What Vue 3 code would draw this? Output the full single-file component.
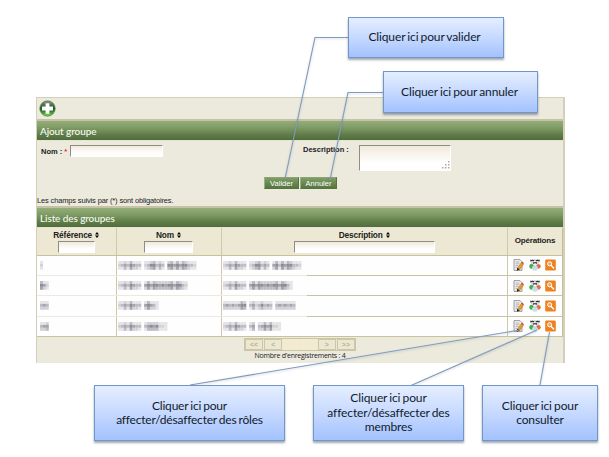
<script setup>
const rows = [
  { id: 1, ref: '20', nom: '234354330235534305545455332', desc: '234354330235534304535455332' },
  { id: 2, ref: '542', nom: '2343543304545545455455320', desc: '234354330454554545545531' },
  { id: 3, ref: '343', nom: '23435433045431', desc: '3434345503423534303434343' },
  { id: 4, ref: '344', nom: '23435433034545221', desc: '23435433034034545221' },
]
const tints = ['none', '#e6e4e6', '#d3d1d6', '#bcbac2', '#a5a3ab', '#8d8b94', '#6e6c75']
const lines = [0, 1, 2]
const cells = (s) =>
  s.split('').flatMap((c, i) =>
    lines.map((r) => {
      const v = Number(c)
      const shade = v === 0 ? 0 : r === 1 ? v : Math.max(1, v - (r === 0 ? 2 : 1) - ((i * 5 + r) % 2))
      return { x: i * 2.9, y: r * 2.9, fill: tints[shade] }
    })
  )
const callouts = [
  { k: 'valider', lines: ['Cliquer ici pour valider'] },
  { k: 'annuler', lines: ['Cliquer ici pour annuler'] },
  { k: 'roles', lines: ['Cliquer ici pour', 'affecter/désaffecter des rôles'] },
  { k: 'membres', lines: ['Cliquer ici pour', 'affecter/désaffecter des', 'membres'] },
  { k: 'consulter', lines: ['Cliquer ici pour', 'consulter'] },
]
</script>

<template>
  <main class="page">
    <section class="panel">
      <div class="toolbar">
        <svg width="17" height="17" viewBox="0 0 17 17">
          <defs>
            <linearGradient id="ball" x1="0" y1="0" x2="0" y2="1">
              <stop offset="0" stop-color="#8b9c86" />
              <stop offset=".45" stop-color="#24502a" />
              <stop offset=".6" stop-color="#1d6a1c" />
              <stop offset="1" stop-color="#7ee04a" />
            </linearGradient>
          </defs>
          <circle cx="8.5" cy="8.5" r="7.7" fill="url(#ball)" stroke="#55734f" stroke-width=".7" />
          <path d="M6.6 3.2h3.8v3.4h3.6v3.8h-3.6v3.4H6.6v-3.4H3V6.6h3.6z" fill="#fff" />
        </svg>
      </div>
      <h2 class="bar">Ajout groupe</h2>
      <form class="form" @submit.prevent>
        <div class="fields">
          <label class="nom">Nom : <i>*</i></label>
          <input class="field nom-input" />
          <label class="desc">Description :</label>
          <div class="field area">
            <svg width="9" height="9" viewBox="0 0 9 9" fill="#aaa">
              <path d="M7 0h1.5v1.5H7zM7 3h1.5v1.5H7zM4 3h1.5v1.5H4zM7 6h1.5v1.5H7zM4 6h1.5v1.5H4zM1 6h1.5v1.5H1z" />
            </svg>
          </div>
        </div>
        <div class="buttons"><button>Valider</button><button>Annuler</button></div>
        <p class="hint">Les champs suivis par (*) sont obligatoires.</p>
      </form>
      <h2 class="bar">Liste des groupes</h2>
      <div class="table">
        <div class="row head">
          <div class="cell"><span>Référence <svg width="4" height="6" viewBox="0 0 4 6"><path d="M2 0L4 2.6H0zM2 6L0 3.4H4z" /></svg></span><input class="field w1" /></div>
          <div class="cell"><span>Nom <svg width="4" height="6" viewBox="0 0 4 6"><path d="M2 0L4 2.6H0zM2 6L0 3.4H4z" /></svg></span><input class="field w2" /></div>
          <div class="cell"><span>Description <svg width="4" height="6" viewBox="0 0 4 6"><path d="M2 0L4 2.6H0zM2 6L0 3.4H4z" /></svg></span><input class="field w3" /></div>
          <div class="cell ops-title">Opérations</div>
        </div>
        <div v-for="r in rows" :key="r.id" class="row">
          <div v-for="(s, i) in [r.ref, r.nom, r.desc]" :key="i" class="cell" :class="'c' + i">
            <svg class="mosaic" width="86" height="9">
              <rect v-for="(c, j) in cells(s)" :key="j" :x="c.x" :y="c.y" width="3" height="3" :fill="c.fill" />
            </svg>
          </div>
          <div class="cell ops">
            <svg width="11" height="12" viewBox="0 0 11 12">
              <path d="M1 .6h6l2 2v8.8H1z" fill="#f0f0f0" stroke="#858585" stroke-width=".8" />
              <path d="M2.5 3h4M2.5 4.8h4M2.5 6.6h3M2.5 8.4h2" stroke="#999" stroke-width=".7" />
              <path d="M4.3 9.4L8.4 3.4l2.2 1.5-4.2 6z" fill="#ee9a2b" stroke="#8d541f" stroke-width=".4" />
              <path d="M4.2 8.8l2.4 1.8-2.7 1.1z" fill="#222" />
              <path d="M8.2 3.8l.8-1 1.9 1.3-.7 1z" fill="#c84335" />
            </svg>
            <svg width="12" height="12" viewBox="0 0 12 12">
              <circle cx="2.8" cy="7.3" r="2.5" fill="#45ad4d" />
              <circle cx="9.3" cy="7.3" r="2.4" fill="#e5683f" />
              <ellipse cx="6" cy="9.1" rx="2.9" ry="2.7" fill="#c5dfe9" />
              <rect x="1.7" y="1.4" width="3.6" height="3.8" rx="1.5" fill="#dcdcdc" />
              <rect x="6.6" y="1.4" width="3.6" height="3.8" rx="1.5" fill="#dcdcdc" />
              <circle cx="6" cy="5.3" r="1.9" fill="#f7efed" stroke="#aaa" stroke-width=".4" />
              <path d="M1.3 2.5V.5l1 .5 1.2-.6 1 .6 1-.5-.3 1.800-1.800-.4zM10.700 2.500V.5l-1 .5L8.500.4l-1 .6-1-.5.3 1.800 1.800-.4zM4 4.800L4.200 3l1.100.4.800-.6.800.6L8 3.100l.1 1.700L6 4.200z" fill="#333" />
            </svg>
            <svg width="11" height="12" viewBox="0 0 11 12">
              <rect x=".2" y=".5" width="10.6" height="11" rx="1.3" fill="#ee811d" />
              <circle cx="4.6" cy="4.8" r="2.1" fill="#f6a55b" stroke="#fff" stroke-width="1" />
              <path d="M6.2 6.5l2.4 2.5" stroke="#fff" stroke-width="1.4" stroke-linecap="round" />
            </svg>
          </div>
        </div>
      </div>
      <footer class="foot">
        <div class="pager"><b>&lt;&lt;</b><b>&lt;</b><em></em><em></em><b>&gt;</b><b>&gt;&gt;</b></div>
        <p>Nombre d'enregistrements : 4</p>
      </footer>
    </section>

    <svg class="links" width="609" height="457" viewBox="0 0 609 457">
      <g fill="none" stroke="#7d9cc0" stroke-width="1.1">
        <path d="M348 37.5H315L285 179" />
        <path d="M383 92.5H348L330 180" />
        <path d="M520 330L190 385" />
        <path d="M537 330L411 385.5" />
        <path d="M549.5 332L540 385" />
      </g>
    </svg>
    <div v-for="c in callouts" :key="c.k" class="callout" :class="c.k">
      <span v-for="l in c.lines" :key="l">{{ l }}</span>
    </div>
  </main>
</template>

<style>
body { background: #fff; overflow: hidden; }
</style>
<style scoped>
* { box-sizing: border-box; }
h2, p { margin: 0; }
.page { position: relative; width: 609px; height: 457px; padding: 97px 0 0 36px; font-family: "Liberation Sans", Arial, sans-serif; font-size: 7.5px; color: #222; }
.panel { width: 529px; height: 266px; background: #ece9dd; border: 1px solid #d3cfb9; border-bottom: 0; border-right-width: 2px; display: flex; flex-direction: column; }
.toolbar { height: 21px; padding: 2px 0 0 2px; }
.toolbar svg { display: block; }
.bar { height: 22px; border-top: 2px solid #c5c2a5; border-bottom: 1px solid #e4e6d3; background: linear-gradient(#94ad79, #7f9b65 35%, #5d7b47 75%, #506c3b); background-clip: padding-box; color: #f7faf0; font: 500 10px/20px Lato, sans-serif; letter-spacing: -.1px; padding-left: 3px; }
.form { height: 65px; display: flex; flex-direction: column; }
.fields { display: flex; height: 36px; padding: 4px 0 0 4px; align-items: flex-start; font-weight: bold; }
.nom { width: 29px; padding-top: 2px; white-space: nowrap; }
.nom i { color: #e33; font-style: normal; }
.nom-input { width: 93px; height: 12px; }
.desc { margin-left: 140px; width: 56px; white-space: nowrap; }
.field { display: block; padding: 0; border: 1px solid #fff; border-top-color: #8f8c80; border-left-color: #8f8c80; border-radius: 0; background: linear-gradient(#f2e9dc, #fff 70%); outline: 0; }
.area { width: 92px; height: 26px; display: flex; align-items: flex-end; justify-content: flex-end; }
.buttons { display: flex; padding-left: 227px; gap: 1px; }
button { height: 12px; width: 35px; padding: 0; border: 1px solid #577343; border-left-color: #9caf87; border-top-color: #8ba375; background: linear-gradient(#7f9d66, #56763e); color: #fff; font: 7.5px/9px "Liberation Sans", sans-serif; }
button + button { width: 37px; }
.hint { margin-top: 7px; line-height: 10px; letter-spacing: -.15px; white-space: nowrap; }
.table { height: 109px; border-right: 1px solid #c5be98; }
.row { display: grid; grid-template-columns: 79.5px 105px 286.5px 1fr; height: 20.35px; background: #fefefe; border-bottom: 1px solid #c8c29f; border-image: linear-gradient(to right, #eceae0 51.5%, #c8c29f 51.5%) 1; }
.head { height: 27.6px; background: #ece8d3; font-weight: bold; }
.head, .row:last-child { border-image: none; }
.cell { border-right: 1px solid #cfc9a9; display: flex; align-items: center; }
.cell:last-child { border-right: 0; }
.head .cell { flex-direction: column; font-size: 8.3px; letter-spacing: -.15px; line-height: 10px; padding-top: 2px; }
.head .ops-title { font-size: 8px; justify-content: center; padding-top: 0; }
.head .field { height: 12px; margin-top: 1px; }
.head svg { margin-left: 1px; }
.w1 { width: 37px; }
.w2 { width: 49px; }
.w3 { width: 141px; }
.mosaic { filter: blur(.6px); margin-left: 1px; display: block; }
.c0 .mosaic { margin-left: 3px; width: 14px; }
.ops { gap: 4.5px; padding-left: 5px; }
.foot { display: flex; flex-direction: column; align-items: center; padding-top: 1px; }
.pager { display: flex; height: 13px; width: 112px; border: 1px solid #cdc6a4; background: #efe8cf; gap: 1px; }
.pager b { flex: 1; border: 1px solid #cdc7aa; color: #b9b28b; font-size: 7px; line-height: 10px; text-align: center; background: #ece7d2; }
.pager em { flex: 1; background: #f2ead1; }
.foot p { font: 500 7px/10px "Open Sans", sans-serif; letter-spacing: -.25px; white-space: nowrap; }
.links { position: absolute; left: 0; top: 0; filter: drop-shadow(0 1px 1px rgba(80, 80, 80, .25)); }
.callout { position: absolute; display: flex; flex-direction: column; align-items: center; justify-content: center; border: 1px solid #7197c8; background: linear-gradient(#e5eeff, #c6d9ff 50%, #a3c2ff); box-shadow: 0 1.5px 2px rgba(70, 80, 100, .5); font: 12px/14.5px Lato, sans-serif; letter-spacing: -.12px; word-spacing: -.8px; color: #111b2c; white-space: nowrap; }
.valider { left: 348px; top: 17px; width: 156px; height: 41px; padding-right: 3px; }
.annuler { left: 383px; top: 71px; width: 155px; height: 42px; padding-right: 2px; }
.roles { left: 94px; top: 385px; width: 191px; height: 56px; letter-spacing: -.2px; }
.membres { left: 313px; top: 385px; width: 151px; height: 56px; }
.consulter { left: 482px; top: 385px; width: 116px; height: 56px; }
</style>
